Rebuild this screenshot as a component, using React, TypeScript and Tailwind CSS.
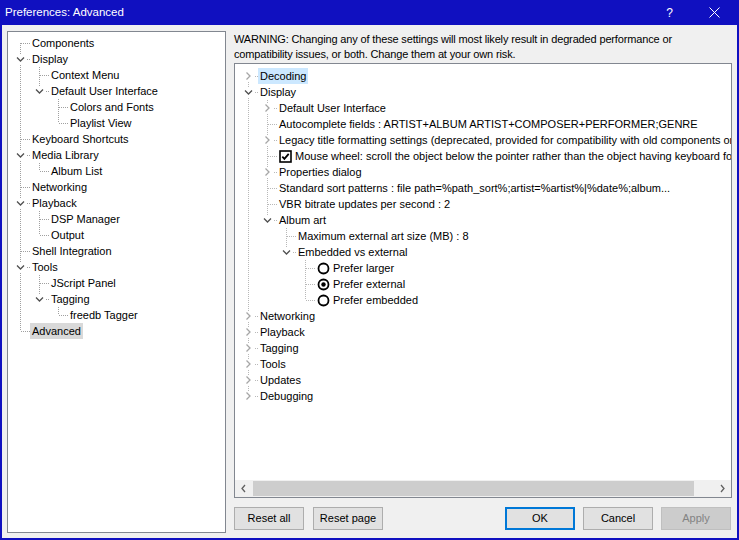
import React from "react";

type Node = {
  label: string;
  children?: Node[];
  expandable?: boolean;
  open?: boolean;
  selected?: boolean;
  kind?: "check" | "radio" | "radio-on";
};

type Row = {
  node: Node;
  level: number;
  guides: boolean[];
  first: boolean;
  last: boolean;
};

function flatten(nodes: Node[], level = 0, guides: boolean[] = [], out: Row[] = []): Row[] {
  nodes.forEach((n, i) => {
    const last = i === nodes.length - 1;
    out.push({ node: n, level, guides, first: level === 0 && i === 0, last });
    if (n.children && n.open) flatten(n.children, level + 1, [...guides, !last], out);
  });
  return out;
}

const leftTree: Node[] = [
  { label: "Components" },
  {
    label: "Display",
    open: true,
    children: [
      { label: "Context Menu" },
      {
        label: "Default User Interface",
        open: true,
        children: [{ label: "Colors and Fonts" }, { label: "Playlist View" }],
      },
    ],
  },
  { label: "Keyboard Shortcuts" },
  { label: "Media Library", open: true, children: [{ label: "Album List" }] },
  { label: "Networking" },
  { label: "Playback", open: true, children: [{ label: "DSP Manager" }, { label: "Output" }] },
  { label: "Shell Integration" },
  {
    label: "Tools",
    open: true,
    children: [
      { label: "JScript Panel" },
      { label: "Tagging", open: true, children: [{ label: "freedb Tagger" }] },
    ],
  },
  { label: "Advanced", selected: true },
];

const rightTree: Node[] = [
  { label: "Decoding", expandable: true, selected: true },
  {
    label: "Display",
    open: true,
    children: [
      { label: "Default User Interface", expandable: true },
      { label: "Autocomplete fields : ARTIST+ALBUM ARTIST+COMPOSER+PERFORMER;GENRE" },
      {
        label: "Legacy title formatting settings (deprecated, provided for compatibility with old components only)",
        expandable: true,
      },
      {
        label: "Mouse wheel: scroll the object below the pointer rather than the object having keyboard focus",
        kind: "check",
      },
      { label: "Properties dialog", expandable: true },
      { label: "Standard sort patterns : file path=%path_sort%;artist=%artist%|%date%;album..." },
      { label: "VBR bitrate updates per second : 2" },
      {
        label: "Album art",
        open: true,
        children: [
          { label: "Maximum external art size (MB) : 8" },
          {
            label: "Embedded vs external",
            open: true,
            children: [
              { label: "Prefer larger", kind: "radio" },
              { label: "Prefer external", kind: "radio-on" },
              { label: "Prefer embedded", kind: "radio" },
            ],
          },
        ],
      },
    ],
  },
  { label: "Networking", expandable: true },
  { label: "Playback", expandable: true },
  { label: "Tagging", expandable: true },
  { label: "Tools", expandable: true },
  { label: "Updates", expandable: true },
  { label: "Debugging", expandable: true },
];

function Guide({ on, color }: { on: boolean; color: string }) {
  return (
    <svg width={19} height={16} className="shrink-0">
      {on && <line x1={9.5} y1={0} x2={9.5} y2={16} stroke={color} strokeDasharray="1 1" />}
    </svg>
  );
}

function Connector({ row, color }: { row: Row; color: string }) {
  const { node, first, last } = row;
  const canExpand = !!node.children || node.expandable;
  return (
    <svg width={19} height={16} className="shrink-0">
      {!first && <line x1={9.5} y1={0} x2={9.5} y2={8} stroke={color} strokeDasharray="1 1" />}
      {!last && <line x1={9.5} y1={8} x2={9.5} y2={16} stroke={color} strokeDasharray="1 1" />}
      <line x1={10} y1={8.5} x2={19} y2={8.5} stroke={color} strokeDasharray="1 1" />
      {canExpand && (
        <>
          <rect x={4} y={3} width={11} height={11} fill="white" />
          {node.open ? (
            <path d="M6 6.5 L9.5 10 L13 6.5" fill="none" stroke="#505050" strokeWidth={1.3} />
          ) : (
            <path d="M7.5 4.5 L11 8 L7.5 11.5" fill="none" stroke="#a6a6a6" strokeWidth={1.3} />
          )}
        </>
      )}
    </svg>
  );
}

function CheckBox() {
  return (
    <svg width={13} height={13} className="shrink-0">
      <rect x={1} y={1} width={11} height={11} fill="white" stroke="#000" strokeWidth={1.6} />
      <path d="M3.3 6.6 L5.4 8.8 L9.7 3.9" fill="none" stroke="#000" strokeWidth={1.8} />
    </svg>
  );
}

function Radio({ on }: { on: boolean }) {
  return (
    <svg width={13} height={13} className="shrink-0">
      <circle cx={6.5} cy={6.5} r={5} fill="white" stroke="#000" strokeWidth={1.8} />
      {on && <circle cx={6.5} cy={6.5} r={2.2} fill="#000" />}
    </svg>
  );
}

function Tree({ nodes, color, selBg }: { nodes: Node[]; color: string; selBg: string }) {
  const rows = flatten(nodes);
  return (
    <div className="flex flex-col">
      {rows.map((r, i) => (
        <div key={i} className="flex h-[16px] items-center">
          {r.guides.map((g, j) => (
            <Guide key={j} on={g} color={color} />
          ))}
          <Connector row={r} color={color} />
          <span
            className={`flex h-[16px] items-center gap-[3px] whitespace-nowrap px-[2px] leading-[16px] ${
              r.node.selected ? selBg : ""
            }`}
          >
            {r.node.kind === "check" && <CheckBox />}
            {r.node.kind === "radio" && <Radio on={false} />}
            {r.node.kind === "radio-on" && <Radio on />}
            {r.node.label}
          </span>
        </div>
      ))}
    </div>
  );
}

function Arrow({ dir }: { dir: "left" | "right" }) {
  return (
    <svg width={17} height={17}>
      <path
        d={dir === "left" ? "M10 5 L7 8.5 L10 12" : "M7 5 L10 8.5 L7 12"}
        fill="none"
        stroke="#606060"
        strokeWidth={1.3}
      />
    </svg>
  );
}

function Btn({ children, kind }: { children: React.ReactNode; kind?: "default" | "disabled" }) {
  const look =
    kind === "default"
      ? "border-2 border-[#0078d7] bg-[#e1e1e1] text-black"
      : kind === "disabled"
        ? "border border-[#bfbfbf] bg-[#cccccc] text-[#838383]"
        : "border border-[#adadad] bg-[#e1e1e1] text-black";
  return <button className={`h-[23px] w-[70px] text-[11px] ${look}`}>{children}</button>;
}

export default function App() {
  return (
    <div className="flex h-[540px] w-[739px] flex-col bg-[#1010c0] font-['Liberation_Sans',Arial,sans-serif] text-[11px] text-black">
      <div className="flex h-[25px] items-center text-white">
        <span className="pl-[5px] text-[11.5px]">Preferences: Advanced</span>
        <div className="ml-auto flex h-full">
          <div className="flex w-[45px] items-center justify-center text-[12px]">?</div>
          <div className="mr-[2px] flex w-[45px] items-center justify-center">
            <svg width={11} height={11}>
              <path d="M0.5 0.5 L10.5 10.5 M10.5 0.5 L0.5 10.5" stroke="white" strokeWidth={1} />
            </svg>
          </div>
        </div>
      </div>

      <div className="mx-[2px] mb-[2px] flex flex-1 gap-[8px] bg-[#f0f0f0] px-[5px] pb-[5px] pt-[6px]">
        <div className="w-[219px] overflow-hidden border border-[#828790] bg-white pl-[3px] pt-[3px]">
          <Tree nodes={leftTree} color="#a0a0a0" selBg="bg-[#d9d9d9]" />
        </div>

        <div className="flex w-[498px] flex-col">
          <p className="h-[32px] pt-[1px] leading-[15px] tracking-[-0.15px]">
            WARNING: Changing any of these settings will most likely result in degraded performance or
            compatibility issues, or both. Change them at your own risk.
          </p>
          <div className="flex h-[435px] flex-col border border-[#828790] bg-white">
            <div className="flex-1 overflow-hidden pl-[4px] pt-[4px]">
              <Tree nodes={rightTree} color="#b8b8b8" selBg="bg-[#cce8ff]" />
            </div>
            <div className="flex h-[17px] bg-[#f0f0f0]">
              <Arrow dir="left" />
              <div className="my-[1px] ml-[1px] w-[441px] bg-[#cdcdcd]" />
              <div className="flex-1" />
              <Arrow dir="right" />
            </div>
          </div>
          <div className="mt-[9px] flex">
            <Btn>Reset all</Btn>
            <div className="ml-[9px]">
              <Btn>Reset page</Btn>
            </div>
            <div className="ml-auto mr-[1px] flex gap-[8px]">
              <Btn kind="default">OK</Btn>
              <Btn>Cancel</Btn>
              <Btn kind="disabled">Apply</Btn>
            </div>
          </div>
        </div>
      </div>
    </div>
  );
}
